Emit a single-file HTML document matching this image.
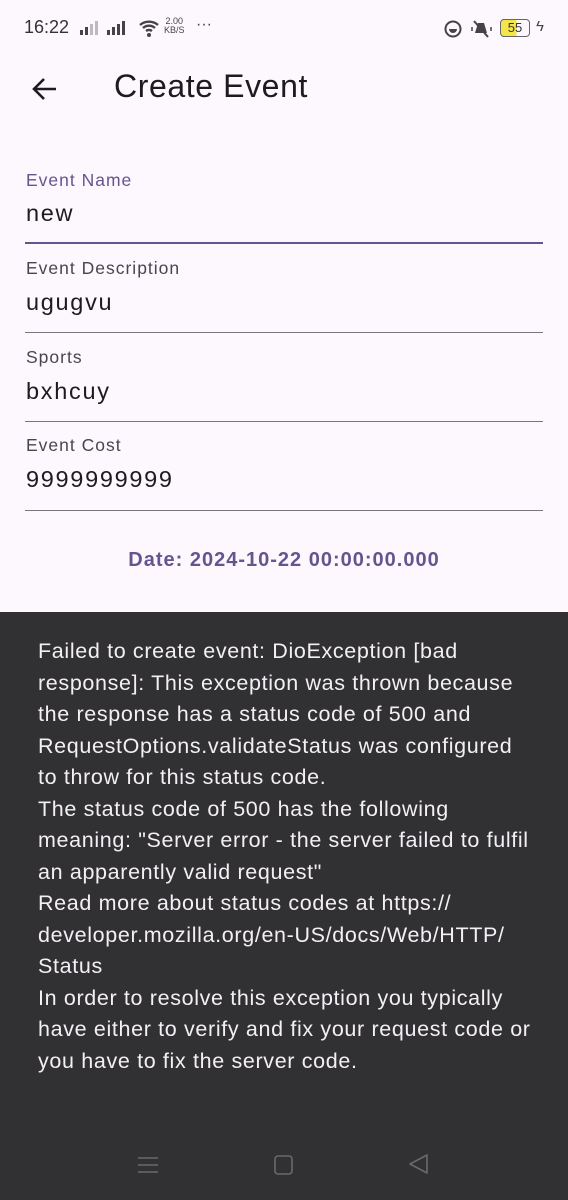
<!DOCTYPE html>
<html><head><meta charset="utf-8"><style>
*{margin:0;padding:0;box-sizing:border-box}
body{width:568px;height:1200px;background:#fdf7fe;font-family:"Liberation Sans",sans-serif;position:relative;overflow:hidden;color:#1d1b20}
.abs{position:absolute}
.lbl{position:absolute;left:26px;font-size:17.5px;color:#49454f;letter-spacing:1px}
.val{position:absolute;left:26px;font-size:23.5px;color:#1d1b20;letter-spacing:1.7px}
.line{position:absolute;left:25px;width:518px;height:1px;background:#79747e}
.snack{position:absolute;left:0;top:612px;width:568px;height:588px;background:#313033}
.msg{position:absolute;left:38px;top:636px;font-size:21.5px;line-height:31.5px;color:#f4eff4;white-space:nowrap;letter-spacing:0.65px}
</style></head><body>
<div class="abs" style="left:24px;top:17px;font-size:18px;color:#333">16:22</div>
<svg class="abs" style="left:78px;top:20px" width="56" height="16"><g fill="#444"><rect x="2" y="10" width="3" height="5"/><rect x="7" y="7" width="3" height="8"/><rect x="12" y="4" width="3" height="11" fill="#bbb"/><rect x="17" y="1" width="3" height="14" fill="#bbb"/><rect x="29" y="10" width="3" height="5"/><rect x="34" y="7" width="3" height="8"/><rect x="39" y="4" width="3" height="11"/><rect x="44" y="1" width="3" height="14"/></g></svg>
<svg class="abs" style="left:138px;top:18px" width="24" height="20"><path d="M2 7a14 14 0 0 1 18 0M5 10a9 9 0 0 1 12 0M8 13a5 5 0 0 1 6 0" stroke="#444" stroke-width="2.4" fill="none"/><circle cx="11" cy="17" r="2" fill="#444"/></svg>
<div class="abs" style="left:164px;top:17px;font-size:9px;line-height:9px;color:#444;text-align:center">2.00<br>KB/S</div>
<div class="abs" style="left:196px;top:16px;font-size:16px;color:#444">···</div>
<svg class="abs" style="left:444px;top:20px" width="20" height="20"><circle cx="9" cy="9" r="7.5" stroke="#444" stroke-width="2" fill="none"/><path d="M5 9a4 4 0 0 0 8 0z" fill="#444"/></svg>
<svg class="abs" style="left:470px;top:18px" width="24" height="22"><path d="M8 5l6 0 3 10H5z" fill="#444"/><path d="M4 3l14 16" stroke="#444" stroke-width="2"/><path d="M2 9v4M21 9v4" stroke="#444" stroke-width="1.5"/></svg>
<div class="abs" style="left:500px;top:19px;width:30px;height:18px;border:1.5px solid #666;border-radius:4px;background:linear-gradient(90deg,#f4e64a 55%,transparent 55%);font-size:13px;text-align:center;line-height:15px;color:#333">55</div>
<div class="abs" style="left:536px;top:18px;font-size:15px;color:#444">ϟ</div>
<svg class="abs" style="left:30px;top:76px" width="28" height="26"><path d="M26 13H4M14 3L4 13l10 10" stroke="#1d1b20" stroke-width="2.6" fill="none"/></svg>
<div class="abs" style="left:114px;top:68px;font-size:32px;color:#1d1b20;letter-spacing:0.6px">Create Event</div>
<div class="lbl" style="top:170px;color:#65558f">Event Name</div>
<div class="val" style="top:200px">new</div>
<div class="line" style="top:242px;height:2px;background:#65558f"></div>
<div class="lbl" style="top:258px">Event Description</div>
<div class="val" style="top:289px">ugugvu</div>
<div class="line" style="top:332px"></div>
<div class="lbl" style="top:347px">Sports</div>
<div class="val" style="top:378px">bxhcuy</div>
<div class="line" style="top:421px"></div>
<div class="lbl" style="top:435px">Event Cost</div>
<div class="val" style="top:466px">9999999999</div>
<div class="line" style="top:510px"></div>
<div class="abs" style="left:0;width:568px;top:549px;text-align:center;font-size:20px;font-weight:bold;color:#65558f;letter-spacing:1px">Date: 2024-10-22 00:00:00.000</div>
<div class="snack"></div>
<div class="msg">Failed to create event: DioException [bad<br>response]: This exception was thrown because<br>the response has a status code of 500 and<br>RequestOptions.validateStatus was configured<br>to throw for this status code.<br>The status code of 500 has the following<br>meaning: "Server error - the server failed to fulfil<br>an apparently valid request"<br>Read more about status codes at https://<br>developer.mozilla.org/en-US/docs/Web/HTTP/<br>Status<br>In order to resolve this exception you typically<br>have either to verify and fix your request code or<br>you have to fix the server code.</div>
<svg class="abs" style="left:126px;top:1150px" width="320" height="30"><g stroke="#6a696c" stroke-width="1.6" fill="none"><path d="M12 8h20M12 15h20M12 22h20"/><rect x="149" y="6" width="17" height="18" rx="3"/><path d="M301 5v18l-17-9z" stroke-linejoin="round"/></g></svg>
</body></html>
